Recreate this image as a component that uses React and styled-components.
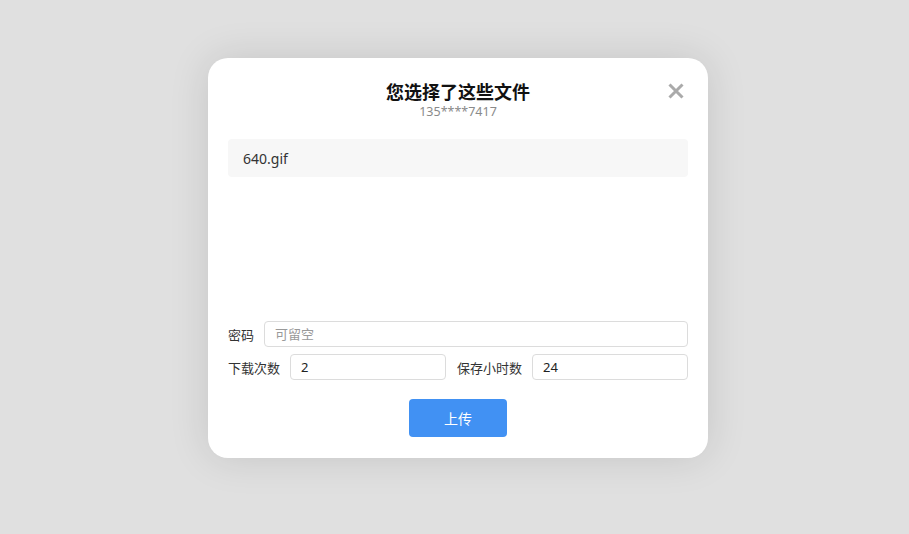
import React from "react";
import styled, { createGlobalStyle } from "styled-components";

const Global = createGlobalStyle`
  html, body { margin: 0; padding: 0; background: #e0e0e0; }
  body { font-family: "Noto Sans CJK SC", "Noto Sans", sans-serif; width: 909px; height: 534px; overflow: hidden; }
  * { box-sizing: border-box; }
`;

const Page = styled.div`
  padding: 58px 0 0 208px;
`;

const Modal = styled.div`
  position: relative;
  width: 500px;
  height: 400px;
  background: #fff;
  border-radius: 20px;
  box-shadow: 0 0 40px rgba(0, 0, 0, 0.12);
  padding: 20px 20px 21px;
  display: flex;
  flex-direction: column;
`;

const Header = styled.div`
  display: flex;
  flex-direction: column;
  align-items: center;
`;

const Title = styled.div`
  font-size: 18px;
  font-weight: 700;
  color: #111;
  line-height: 26px;
`;

const Sub = styled.div`
  font-size: 12.5px;
  color: #8a8a8a;
  line-height: 16px;
  font-family: "Noto Sans", sans-serif;
`;

const Close = styled.button`
  position: absolute;
  top: 25px;
  right: 24px;
  width: 16px;
  height: 16px;
  border: 0;
  padding: 0;
  background: none;
  cursor: pointer;
  svg { display: block; }
`;

const List = styled.div`
  flex: 1;
  margin-top: 19px;
`;

const FileItem = styled.div`
  height: 38px;
  background: #f7f7f7;
  border-radius: 4px;
  padding: 0 15px;
  display: flex;
  align-items: center;
  font-size: 14px;
  color: #333;
  font-family: "Noto Sans", sans-serif;
`;

const Form = styled.div`
  display: flex;
  flex-direction: column;
  gap: 7px;
`;

const Row = styled.div`
  display: grid;
  grid-template-columns: ${(p) => p.$cols};
  align-items: center;
  column-gap: 10px;
`;

const Label = styled.label`
  font-size: 13px;
  color: #333;
  white-space: nowrap;
  margin-left: ${(p) => p.$ml || 0}px;
`;

const Input = styled.input`
  height: 26px;
  width: 100%;
  border: 1px solid #dcdcdc;
  border-radius: 4px;
  padding: 0 10px;
  font-size: 13px;
  color: #222;
  font-family: "Noto Sans", "Noto Sans CJK SC", sans-serif;
  outline: none;
  &::placeholder { color: #999; font-family: "Noto Sans CJK SC", sans-serif; }
`;

const Actions = styled.div`
  display: flex;
  justify-content: center;
  margin-top: 19px;
`;

const Upload = styled.button`
  width: 98px;
  height: 38px;
  border: 0;
  border-radius: 4px;
  background: #4191f3;
  color: #fff;
  font-size: 14px;
  font-family: "Noto Sans CJK SC", sans-serif;
  cursor: pointer;
`;

export default function App() {
  return (
    <Page>
      <Global />
      <Modal>
        <Header>
          <Title>您选择了这些文件</Title>
          <Sub>135****7417</Sub>
        </Header>
        <Close aria-label="close">
          <svg width="16" height="16" viewBox="0 0 16 16">
            <path d="M1.5 1.5 L14.5 14.5 M14.5 1.5 L1.5 14.5" stroke="#aaaaaa" strokeWidth="3" strokeLinecap="butt" />
          </svg>
        </Close>
        <List>
          <FileItem>640.gif</FileItem>
        </List>
        <Form>
          <Row $cols="auto 1fr">
            <Label>密码</Label>
            <Input placeholder="可留空" />
          </Row>
          <Row $cols="auto 1fr auto 1fr">
            <Label>下载次数</Label>
            <Input defaultValue="2" />
            <Label $ml={1}>保存小时数</Label>
            <Input defaultValue="24" />
          </Row>
        </Form>
        <Actions>
          <Upload>上传</Upload>
        </Actions>
      </Modal>
    </Page>
  );
}
